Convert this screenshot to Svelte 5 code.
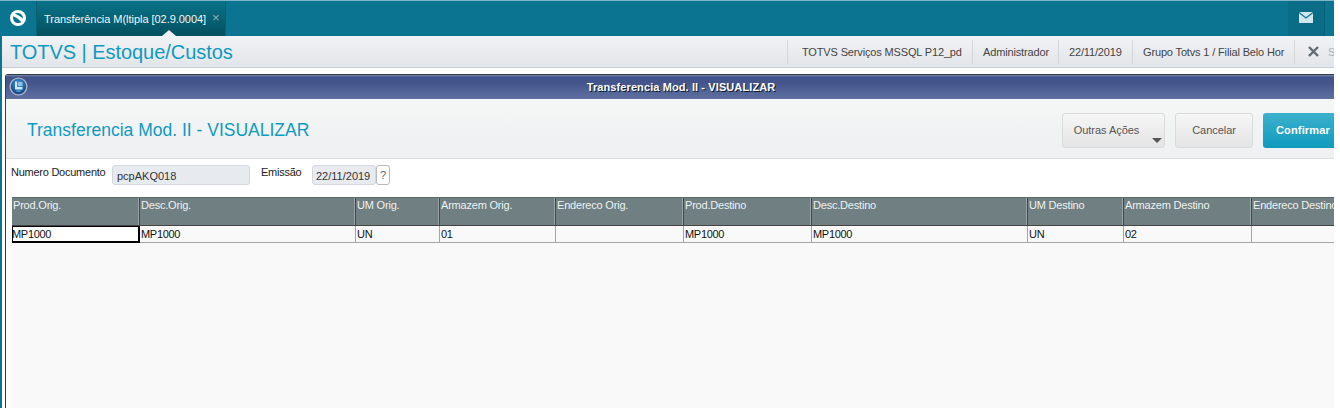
<script>
  const cols = [
    { h: 'Prod.Orig.', v: 'MP1000', w: 128 },
    { h: 'Desc.Orig.', v: 'MP1000', w: 216 },
    { h: 'UM Orig.', v: 'UN', w: 84 },
    { h: 'Armazem Orig.', v: '01', w: 116 },
    { h: 'Endereco Orig.', v: '', w: 128 },
    { h: 'Prod.Destino', v: 'MP1000', w: 128 },
    { h: 'Desc.Destino', v: 'MP1000', w: 216 },
    { h: 'UM Destino', v: 'UN', w: 96 },
    { h: 'Armazem Destino', v: '02', w: 128 },
    { h: 'Endereco Destino', v: '', w: 128 }
  ];
  const info = [
    { t: 'TOTVS Serviços MSSQL P12_pd', w: 185 },
    { t: 'Administrador', w: 86 },
    { t: '22/11/2019', w: 74 },
    { t: 'Grupo Totvs 1 / Filial Belo Hor', w: 162 }
  ];
</script>

<div class="page">
  <header class="topbar">
    <div class="logo">
      <svg width="18" height="18" viewBox="0 0 18 18">
        <circle cx="9" cy="9" r="8" fill="#fff" />
        <path d="M5.6 4.6 C7.8 3.6 11 4 12.8 6 C13.7 7.1 14 8.4 13.9 9.8 C11.6 7.6 8.8 5.7 5.6 4.6 Z" fill="#0b7490" />
        <path d="M4.1 7.2 C7 8.3 10 10.4 12.4 13.3 C10.4 14.6 7.1 14.4 5.3 12.4 C4.2 11.1 3.9 9 4.1 7.2 Z" fill="#0b7490" />
      </svg>
    </div>
    <div class="tab">
      <span>Transferência M(ltipla [02.9.0004]</span>
      <b class="tabx">×</b>
      <i class="notch"></i>
    </div>
    <div class="grow"></div>
    <div class="mail">
      <svg width="14" height="11" viewBox="0 0 14 11">
        <rect width="14" height="11" rx="0.5" fill="#d3e6ee" />
        <path d="M0 0.5 L7 6 L14 0.5" fill="none" stroke="#0b7490" stroke-width="1.2" />
      </svg>
    </div>
    <div class="edge"></div>
  </header>

  <div class="body">
    <div class="appbar">
      <h1>TOTVS | Estoque/Custos</h1>
      <div class="grow"></div>
      {#each info as item}
        <div class="info" style="width: {item.w}px">{item.t}</div>
      {/each}
      <div class="close">
        <svg width="11" height="11" viewBox="0 0 11 11">
          <path d="M1 1 L10 10 M10 1 L1 10" stroke="#5f6b75" stroke-width="2.4" />
        </svg>
        <span>S</span>
      </div>
    </div>

    <section class="window">
      <div class="titlebar">
        <svg class="winicon" width="19" height="19" viewBox="0 0 19 19">
          <defs>
            <radialGradient id="g" cx="50%" cy="35%" r="65%">
              <stop offset="0" stop-color="#3f9fdd" />
              <stop offset="1" stop-color="#0b3c7c" />
            </radialGradient>
          </defs>
          <circle cx="9.5" cy="9.5" r="8.4" fill="url(#g)" stroke="#a7b1c2" stroke-width="1.4" />
          <path d="M6 4.5 H8 V10 H13.5 V12.5 H6 Z" fill="#cfe4f5" />
          <rect x="9" y="5" width="4.5" height="4" fill="#8fc0e6" />
          <rect x="7.5" y="13.5" width="4" height="1.2" fill="#6fa6d6" />
        </svg>
        <span>Transferencia Mod. II - VISUALIZAR</span>
      </div>

      <div class="toolbar">
        <h2>Transferencia Mod. II - VISUALIZAR</h2>
        <div class="grow"></div>
        <button class="btn more">Outras Ações<i class="caret"></i></button>
        <button class="btn cancel">Cancelar</button>
        <button class="btn primary">Confirmar</button>
      </div>

      <div class="form">
        <label class="l1" for="doc">Numero Documento</label>
        <div class="field f1" id="doc">pcpAKQ018</div>
        <label class="l2" for="em">Emissão</label>
        <div class="field f2" id="em">22/11/2019</div>
        <div class="help">?</div>
      </div>

      <div class="gridarea">
        <div class="grid">
          <div class="row head">
            {#each cols as c}
              <div class="cell" style="width: {c.w}px">{c.h}</div>
            {/each}
          </div>
          <div class="row data">
            {#each cols as c, i}
              <div class="cell" class:focus={i === 0} style="width: {c.w}px">{c.v}</div>
            {/each}
          </div>
        </div>
      </div>
    </section>
  </div>
</div>

<style>
  :global(body) {
    margin: 0;
    background: #fff;
  }
  .page {
    width: 1334px;
    height: 408px;
    overflow: hidden;
    font-family: "Liberation Sans", Arial, sans-serif;
    font-size: 11px;
    color: #333;
    display: flex;
    flex-direction: column;
    background: linear-gradient(#0b7490, #0b7490) left top / 2px 100% no-repeat #fff;
  }
  .grow {
    flex: 1;
  }
  .topbar {
    height: 35px;
    flex: none;
    display: flex;
    background: #0b7490;
    border-top: 1px solid #7fb3c6;
  }
  .logo {
    width: 37px;
    display: flex;
    align-items: center;
    justify-content: center;
    box-sizing: border-box;
    padding-bottom: 1px;
    border-right: 1px solid #0a6176;
  }
  .tab {
    position: relative;
    width: 189px;
    box-sizing: border-box;
    padding-left: 7px;
    display: flex;
    align-items: center;
    color: #f2f8fa;
    font-size: 11px;
    letter-spacing: -0.04px;
    background: linear-gradient(#0a7389, #04505f);
    border-right: 1px solid #0a6176;
  }
  .tabx {
    margin-left: 6px;
    font-weight: 400;
    font-size: 13px;
    color: #8fb3bf;
    line-height: 1;
    margin-top: -2px;
  }
  .notch {
    position: absolute;
    left: 125px;
    bottom: 0;
    width: 0;
    height: 0;
    border-left: 7px solid transparent;
    border-right: 7px solid transparent;
    border-bottom: 6px solid #eef0f3;
  }
  .mail {
    width: 37px;
    display: flex;
    align-items: center;
    justify-content: center;
    padding-bottom: 2px;
    background: #0a6c86;
    border-right: 1px solid #0a5f76;
    box-sizing: border-box;
  }
  .edge {
    width: 9px;
  }
  .body {
    flex: 1;
    min-height: 0;
    margin-left: 2px;
    display: flex;
    flex-direction: column;
    background: #fff;
  }
  .appbar {
    height: 32px;
    flex: none;
    box-sizing: border-box;
    display: flex;
    align-items: center;
    background: linear-gradient(#f1f3f5, #e2e5e9);
    border-bottom: 1px solid #c9ced3;
  }
  h1 {
    margin: 2px 0 0 8px;
    font-size: 20px;
    font-weight: 400;
    color: #0f9abf;
    letter-spacing: -0.05px;
  }
  .info {
    height: 24px;
    line-height: 24px;
    box-sizing: border-box;
    padding-left: 10px;
    border-left: 1px solid #d3d7dc;
    color: #444;
    font-size: 11px;
    letter-spacing: -0.15px;
    white-space: nowrap;
    overflow: hidden;
  }
  .info:nth-of-type(2) {
    padding-left: 14px;
  }
  .close {
    height: 24px;
    width: 40px;
    flex: none;
    box-sizing: border-box;
    padding-left: 13px;
    border-left: 1px solid #d3d7dc;
    display: flex;
    align-items: center;
    gap: 9px;
    color: #a8adb3;
    overflow: hidden;
  }
  .close svg {
    flex: none;
  }
  .window {
    flex: 1;
    min-height: 0;
    margin: 6px 0 0 3px;
    display: flex;
    flex-direction: column;
    background: #fff;
    border-left: 1px solid #1f3f74;
    border-top: 1px solid #333a46;
    border-top-left-radius: 3px;
  }
  .titlebar {
    position: relative;
    height: 24px;
    flex: none;
    display: flex;
    align-items: center;
    justify-content: center;
    background: linear-gradient(#7d88ab 0, #42538a 2px, #44558b 8px, #5f70a0 100%);
    color: #fff;
    font-size: 11px;
    font-weight: 700;
    letter-spacing: 0.1px;
    text-shadow: 1px 1px 0 #10182c;
    padding-left: 22px;
    box-sizing: border-box;
  }
  .winicon {
    position: absolute;
    left: 3px;
    top: 2px;
  }
  .toolbar {
    height: 60px;
    flex: none;
    box-sizing: border-box;
    display: flex;
    align-items: center;
    background: linear-gradient(#f5f6f6, #eef0f1);
    border-bottom: 1px solid #dcdfe1;
    padding: 3px 0 0 21px;
    gap: 10px;
  }
  h2 {
    margin: 0;
    font-size: 17.5px;
    font-weight: 400;
    color: #0f9abf;
  }
  .btn {
    position: relative;
    height: 35px;
    box-sizing: border-box;
    border: 1px solid #d8dadc;
    border-radius: 3px;
    background: linear-gradient(#f6f6f6, #e4e4e4);
    color: #555;
    font: 11px "Liberation Sans", Arial, sans-serif;
    letter-spacing: -0.05px;
    padding: 0;
  }
  .more {
    width: 103px;
    padding-right: 14px;
  }
  .caret {
    position: absolute;
    right: 2px;
    bottom: 4px;
    width: 0;
    height: 0;
    border-left: 5px solid transparent;
    border-right: 5px solid transparent;
    border-top: 5px solid #555;
  }
  .cancel {
    width: 78px;
  }
  .primary {
    width: 71px;
    border: 0;
    border-radius: 3px 0 0 3px;
    background: linear-gradient(#3db1cd, #0f9abd);
    color: #fff;
    font-weight: 700;
    letter-spacing: 0.15px;
    text-align: left;
    padding-left: 13px;
  }
  .form {
    height: 38px;
    flex: none;
    display: flex;
    align-items: flex-start;
    color: #222;
    font-size: 11px;
    background: #fff;
  }
  .form label {
    margin-top: 7px;
    letter-spacing: -0.25px;
  }
  .l1 {
    margin-left: 5px;
    width: 101px;
  }
  .field {
    margin-top: 6px;
    height: 20px;
    line-height: 20px;
    box-sizing: border-box;
    background: #e7eaef;
    border: 1px solid #d4d7dc;
    border-radius: 3px;
    padding-left: 4px;
    color: #333;
  }
  .f1 {
    width: 138px;
  }
  .l2 {
    margin-left: 11px;
    width: 51px;
  }
  .f2 {
    width: 64px;
    padding-left: 3px;
  }
  .help {
    margin-top: 6px;
    width: 14px;
    height: 20px;
    line-height: 19px;
    box-sizing: border-box;
    text-align: center;
    border: 1px solid #bbb;
    border-radius: 3px;
    background: #fff;
    color: #666;
  }
  .gridarea {
    flex: 1;
    min-height: 0;
    padding-left: 6px;
    background: linear-gradient(#f9f9f9, #f9f9f9) 6px 0 no-repeat;
  }
  .grid {
    width: 1400px;
    font-size: 11px;
  }
  .row {
    display: flex;
  }
  .head {
    height: 29px;
    box-sizing: border-box;
    background: #6f7f82;
    color: #eef2f2;
    border-top: 1px solid #59676a;
    border-bottom: 1px solid #444;
    letter-spacing: -0.2px;
  }
  .head .cell {
    box-sizing: border-box;
    padding-left: 1px;
    padding-top: 1px;
    border-right: 1px solid #3f4a4d;
    box-shadow: inset -1px 0 0 #9aa5a7;
  }
  .data {
    height: 17px;
    box-sizing: border-box;
    background: #f9f9f9;
    border-bottom: 1px solid #a5a5a5;
    color: #111;
    letter-spacing: -0.3px;
  }
  .data .cell {
    box-sizing: border-box;
    padding-left: 1px;
    line-height: 16px;
    border-right: 1px solid #a5a5a5;
  }
  .data .focus {
    border: 1px solid #000;
    border-bottom-width: 2px;
    border-right-width: 2px;
    background: #fff;
    height: 17px;
    line-height: 14px;
    padding-left: 0;
    text-indent: -1px;
  }
</style>
